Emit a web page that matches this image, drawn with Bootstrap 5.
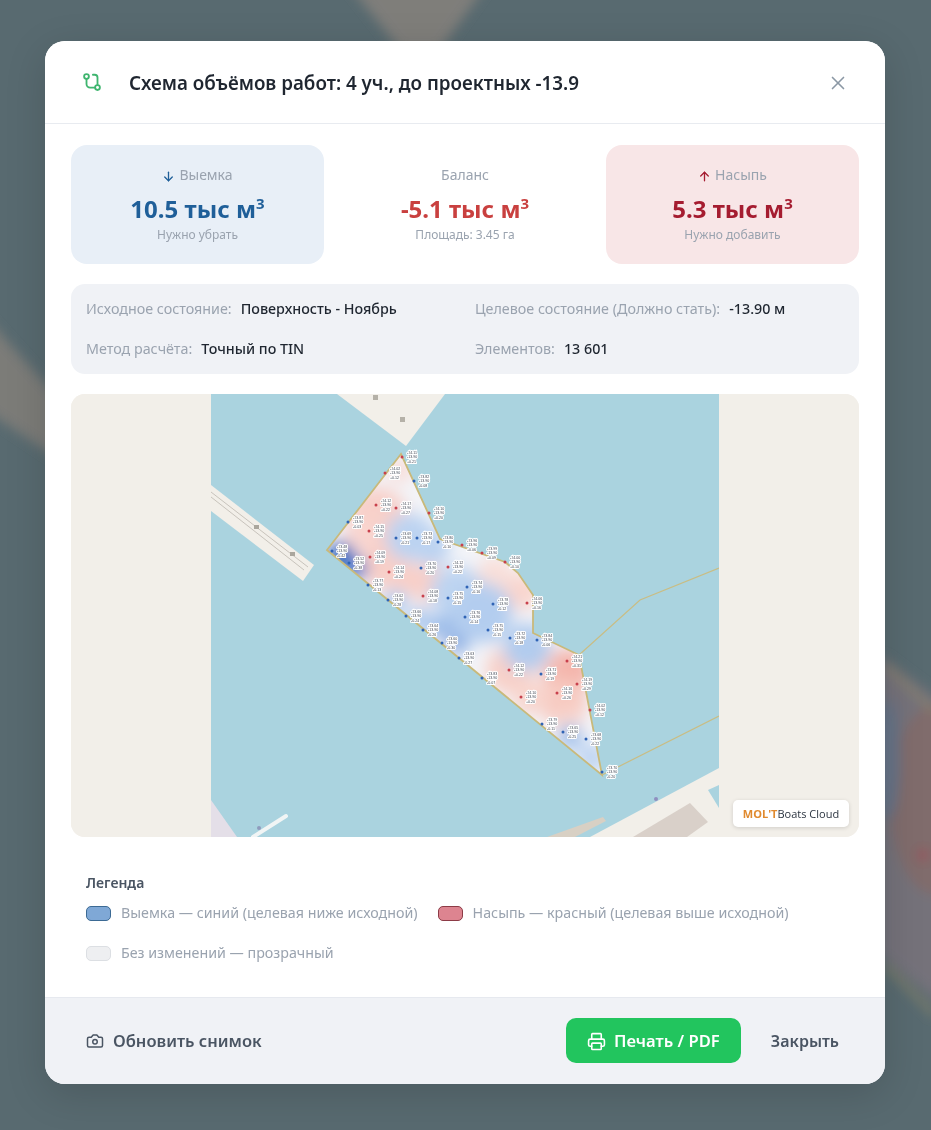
<!doctype html>
<html lang="ru">
<head>
  <meta charset="utf-8">
  <title>Схема объёмов работ</title>
  <link href="https://cdn.jsdelivr.net/npm/bootstrap@5.3.3/dist/css/bootstrap.min.css" rel="stylesheet">
  <style>
    html, body { height: 100%; }
    body { background: #586a70; font-family: "Noto Sans", "Open Sans", sans-serif; overflow: hidden; }
    .backdrop-map { position: fixed; inset: 0; width: 100%; height: 100%; }
    .page-wrap { position: relative; padding: 41px 46px 46px 45px; }
    .report-modal { border: 0; border-radius: 20px; overflow: hidden; box-shadow: 0 10px 40px rgba(0, 0, 0, .15); }
    .report-head { height: 83px; padding: 1px 36px 0; background: #fff; border-bottom: 1px solid #e8ebf0; }
    .report-title { font-size: 18.8px; font-weight: 600; color: #1f2630; margin: 2px 0 0 26px; }
    .btn-x { background: none; border: 0; padding: 0; color: #8b98a5; line-height: 0; margin-left: auto; }
    .report-body { padding: 21px 26px 0; }
    .kpi-grid { display: grid; grid-template-columns: 253px 1fr 253px; gap: 20px; }
    .kpi-box { height: 119px; border-radius: 16px; text-align: center; padding-top: 20px; }
    .kpi-out { background: #e8eff7; }
    .kpi-in { background: #f8e6e7; }
    .kpi-label { font-size: 14px; line-height: 20px; color: #9aa3af; }
    .kpi-value { font-size: 24px; font-weight: 700; line-height: 34px; margin-top: 7px; }
    .kpi-value sup { font-size: 15px; top: -.6em; }
    .kpi-note { font-size: 12px; line-height: 16px; color: #9aa3af; margin-top: 1px; }
    .c-out { color: #1f5f99; }
    .c-bal { color: #c9403f; }
    .c-in { color: #a51c30; }
    .info-box { background: #f0f2f6; border-radius: 14px; margin-top: 20px; height: 90px; padding: 5px 15px; display: grid; grid-template-columns: 389px 1fr; grid-auto-rows: 40px; align-items: center; font-size: 14.3px; }
    .info-box span { color: #9aa3af; margin-right: 9px; }
    .info-box b { color: #1f2630; font-weight: 500; }
    .map-box { position: relative; margin-top: 20px; height: 443px; border-radius: 14px; overflow: hidden; background: #f2efe9; }
    .map-box svg { display: block; }
    .map-brand { position: absolute; right: 10px; bottom: 10px; width: 116px; height: 27px; background: #fff; border-radius: 5px; box-shadow: 0 1px 4px rgba(0, 0, 0, .14); font-size: 11px; line-height: 27px; text-align: center; color: #2b3440; font-family: "Open Sans", sans-serif; }
    .map-brand b { color: #e08a2e; }
    .legend-box { padding: 36px 15px 0; height: 160px; }
    .legend-title { font-size: 14px; font-weight: 600; color: #4a5563; line-height: 20px; margin-bottom: 10px; }
    .legend-row { display: flex; flex-wrap: wrap; column-gap: 20px; row-gap: 20px; }
    .legend-item { display: flex; align-items: center; gap: 10px; font-size: 14.25px; line-height: 20px; color: #9aa3af; }
    .swatch { width: 25px; height: 15px; border-radius: 5px; border: 1px solid; }
    .sw-out { background: #7fa8d6; border-color: #3c6a94; }
    .sw-in { background: #dd8490; border-color: #8c3b46; }
    .sw-none { background: #eeeff1; border-color: #dcdfe3; }
    .report-foot { height: 87px; background: #f0f2f6; border-top: 1px solid #e6e9ef; padding: 0 26px 0 41px; }
    .btn-snap, .btn-close-txt { background: none; border: 0; padding: 0; font-size: 16.5px; font-weight: 600; color: #4a5563; }
    .btn-snap { gap: 9px; }
    .btn-close-txt { margin-left: 30px; margin-right: 20px; font-size: 16px; }
    .btn-print { background: #22c55e; color: #fff; border: 0; border-radius: 10px; width: 175px; height: 45px; font-size: 16.6px; font-weight: 600; margin-bottom: 2px; padding: 2px 0 0; }
    .btn-print:hover { background: #22c55e; color: #fff; }
    .pt-label { font-family: "Liberation Sans", sans-serif; font-size: 3.6px; fill: #3d4452; stroke: #fff; stroke-width: 2px; paint-order: stroke; }
  </style>
</head>
<body>
  <svg class="backdrop-map" viewBox="0 0 931 1130" preserveAspectRatio="none" aria-hidden="true">
    <defs><filter id="bgBlur" x="-20%" y="-20%" width="140%" height="140%"><feGaussianBlur stdDeviation="6"/></filter></defs>
    <rect width="931" height="1130" fill="#586a70"/>
    <g filter="url(#bgBlur)">
      <polygon points="345,-20 490,-20 440,50 400,50" fill="#7f7e7a"/>
      <polygon points="-30,300 60,400 60,460 -30,400" fill="#7b7b78"/>
      <polygon points="880,655 960,715 960,1020 880,955" fill="#75727a"/>
      <ellipse cx="935" cy="800" rx="45" ry="95" fill="#806c6c"/>
      <ellipse cx="888" cy="760" rx="12" ry="60" fill="#667387"/>
      <circle cx="923" cy="855" r="6" fill="#98525c"/>
      <path d="M885 665 L935 712" stroke="#8b8468" stroke-width="4" fill="none"/>
      <path d="M885 965 L935 1015" stroke="#8b8468" stroke-width="4" fill="none"/>
    </g>
  </svg>

  <div class="page-wrap">
    <div class="card report-modal">
      <div class="report-head d-flex align-items-center">
        <svg width="22" height="22" viewBox="0 0 24 24" fill="none" stroke="#3fb56f" stroke-width="2" stroke-linecap="round" stroke-linejoin="round">
          <circle cx="6" cy="5" r="2.6"/>
          <path d="M6 7.6V13a4 4 0 0 0 4 4h5.4"/>
          <path d="M13 3h2a3 3 0 0 1 3 3v8.400"/>
          <circle cx="18" cy="17" r="2.6"/>
        </svg>
        <h5 class="report-title">Схема объёмов работ: 4 уч., до проектных -13.9</h5>
        <button class="btn-x" type="button" aria-label="Закрыть">
          <svg width="22" height="22" viewBox="0 0 24 24" fill="none" stroke="currentColor" stroke-width="1.8" stroke-linecap="round"><path d="M18 6 6 18"/><path d="m6 6 12 12"/></svg>
        </button>
      </div>

      <div class="report-body">
        <div class="kpi-grid">
          <div class="kpi-box kpi-out">
            <div class="kpi-label">
              <svg class="c-out me-1" width="13" height="13" viewBox="0 0 24 24" fill="none" stroke="currentColor" stroke-width="2.400" stroke-linecap="round" stroke-linejoin="round"><path d="M12 4v16"/><path d="m19 13-7 7-7-7"/></svg>Выемка
            </div>
            <div class="kpi-value c-out">10.5 тыс м<sup>3</sup></div>
            <div class="kpi-note">Нужно убрать</div>
          </div>
          <div class="kpi-box">
            <div class="kpi-label">Баланс</div>
            <div class="kpi-value c-bal">-5.1 тыс м<sup>3</sup></div>
            <div class="kpi-note">Площадь: 3.45 га</div>
          </div>
          <div class="kpi-box kpi-in">
            <div class="kpi-label">
              <svg class="c-in me-1" width="13" height="13" viewBox="0 0 24 24" fill="none" stroke="currentColor" stroke-width="2.400" stroke-linecap="round" stroke-linejoin="round"><path d="M12 20V4"/><path d="m5 11 7-7 7 7"/></svg>Насыпь
            </div>
            <div class="kpi-value c-in">5.3 тыс м<sup>3</sup></div>
            <div class="kpi-note">Нужно добавить</div>
          </div>
        </div>

        <div class="info-box">
          <div><span>Исходное состояние:</span><b>Поверхность - Ноябрь</b></div>
          <div><span>Целевое состояние (Должно стать):</span><b>-13.90 м</b></div>
          <div><span>Метод расчёта:</span><b>Точный по TIN</b></div>
          <div><span>Элементов:</span><b>13 601</b></div>
        </div>

        <div class="map-box">
          <svg id="schema" width="788" height="443" viewBox="71 394 788 443">
            <defs>
              <clipPath id="site"><polygon points="327,550 401,454 440,539 505,562 518,573 533,595 533,633 579,655 602,775"/></clipPath>
              <clipPath id="tile"><rect x="211" y="394" width="508" height="443"/></clipPath>
              <filter id="heatBlur" x="-10%" y="-10%" width="120%" height="120%"><feGaussianBlur stdDeviation="8"/></filter>
            </defs>
            <rect x="71" y="394" width="788" height="443" fill="#f2efe9"/>
            <g clip-path="url(#tile)">
              <rect x="211" y="394" width="508" height="443" fill="#aad3df"/>
              <polygon points="337,394 445,394 406,446" fill="#f2efe9"/>
              <polygon points="211,485 314,565 303,581 211,511" fill="#f2efe9"/>
              <path d="M211 492 L308 567 M211 497 L304 570" stroke="#bdb8b0" stroke-width=".8" fill="none"/>
              <path d="M254 525h5v4h-5z M290 552h5v4h-5z" fill="#aaa69d"/>
              <polygon points="211,800 237,837 211,837" fill="#e4dfe8"/>
              <path d="M253 837 L286 816" stroke="#f1f5f5" stroke-width="4" stroke-linecap="round"/>
              <circle cx="259" cy="828" r="2" fill="#8f9bbd"/>
              <polygon points="590,837 719,768 719,837" fill="#f2efe9"/>
              <polygon points="547,837 603,817 606,821 575,837" fill="#d8d0c4"/>
              <polygon points="633,837 690,803 708,822 687,837" fill="#d9d0c9"/>
              <polygon points="708,790 719,785 719,808" fill="#aad3df"/>
              <circle cx="656" cy="799" r="2" fill="#8f8fc0"/>
              <path d="M373 395h5v5h-5z M400 417h5v5h-5z" fill="#b5b1a8"/>
              <path d="M579 655 L640 600 L719 568 M602 775 L719 716" stroke="#c9bd84" stroke-width="1.200" fill="none"/>
            </g>
            <g clip-path="url(#site)">
              <rect x="320" y="450" width="290" height="330" fill="#f3f4f8"/>
              <g id="heat" filter="url(#heatBlur)"></g>
            </g>
            <polygon points="327,550 401,454 440,539 505,562 518,573 533,595 533,633 579,655 602,775" fill="none" stroke="#c9b97a" stroke-width="1.800"/>
            <g id="points"></g>
          </svg>
          <div class="map-brand"><b>MOL'T</b>Boats Cloud</div>
        </div>

        <div class="legend-box">
          <div class="legend-title">Легенда</div>
          <div class="legend-row">
            <div class="legend-item"><i class="swatch sw-out"></i>Выемка — синий (целевая ниже исходной)</div>
            <div class="legend-item"><i class="swatch sw-in"></i>Насыпь — красный (целевая выше исходной)</div>
            <div class="legend-item"><i class="swatch sw-none"></i>Без изменений — прозрачный</div>
          </div>
        </div>
      </div>

      <div class="report-foot d-flex align-items-center">
        <button class="btn-snap d-flex align-items-center" type="button">
          <svg width="18" height="18" viewBox="0 0 24 24" fill="none" stroke="currentColor" stroke-width="2" stroke-linecap="round" stroke-linejoin="round"><path d="M14.500 4h-5L7 7H4a2 2 0 0 0-2 2v9a2 2 0 0 0 2 2h16a2 2 0 0 0 2-2V9a2 2 0 0 0-2-2h-3l-2.500-3z"/><circle cx="12" cy="13" r="3"/></svg>
          Обновить снимок
        </button>
        <button class="btn btn-print d-flex align-items-center justify-content-center gap-2 ms-auto" type="button">
          <svg width="19" height="19" viewBox="0 0 24 24" fill="none" stroke="currentColor" stroke-width="2" stroke-linecap="round" stroke-linejoin="round"><path d="M6 18H4a2 2 0 0 1-2-2v-5a2 2 0 0 1 2-2h16a2 2 0 0 1 2 2v5a2 2 0 0 1-2 2h-2"/><path d="M6 9V3a1 1 0 0 1 1-1h10a1 1 0 0 1 1 1v6"/><rect x="6" y="14" width="12" height="8" rx="1"/></svg>
          Печать / PDF
        </button>
        <button class="btn-close-txt" type="button">Закрыть</button>
      </div>
    </div>
  </div>

  <script src="https://cdn.jsdelivr.net/npm/bootstrap@5.3.3/dist/js/bootstrap.bundle.min.js"></script>
  <script>
    const NS = 'http://www.w3.org/2000/svg';

    // x, y, radius, colour
    const blobs = [
      [377, 517, 30, '#f8d0c9'], [387, 563, 27, '#f8cfc8'], [427, 583, 20, '#f8d0c9'], [400, 470, 12, '#f9dcd7'],
      [360, 535, 16, '#f9d6d0'], [410, 580, 14, '#f8cfc8'], [495, 575, 18, '#f9dfd9'], [522, 592, 18, '#f9d6ce'],
      [510, 670, 24, '#f8d0c8'], [567, 673, 24, '#f4b4aa'], [563, 702, 24, '#f7cac1'], [530, 697, 18, '#f8d5ce'],
      [568, 725, 14, '#f9d9d2'], [452, 645, 9, '#f9dcd6'], [545, 660, 12, '#f7cbc2'],
      [341, 556, 14, '#3169c0'], [356, 569, 11, '#3f76cb'], [410, 537, 24, '#bcd3f1'], [432, 548, 18, '#bcd3f1'],
      [457, 593, 27, '#bdd4f1'], [483, 613, 30, '#b3cdef'], [527, 647, 24, '#b2ccee'], [443, 628, 13, '#9bbce9'],
      [458, 644, 11, '#8db1e5'], [395, 603, 13, '#b2ccee'], [420, 620, 12, '#acc8ed'], [570, 737, 13, '#a5c3eb'], [592, 758, 15, '#c0d5f2']
    ];
    const heat = document.getElementById('heat');
    blobs.forEach(b => {
      const c = document.createElementNS(NS, 'circle');
      c.setAttribute('cx', b[0]);
      c.setAttribute('cy', b[1]);
      c.setAttribute('r', b[2]);
      c.setAttribute('fill', b[3]);
      heat.appendChild(c);
    });

    // x, y, height difference (+ fill, - cut)
    const pts = [
      [402, 457, .21], [385, 473, .12], [414, 481, -.08], [429, 513, .2], [376, 505, .22], [396, 508, .27],
      [348, 522, -.03], [369, 531, .25], [396, 538, -.21], [417, 538, -.17], [438, 542, -.1], [462, 545, .06],
      [482, 553, .09], [505, 562, .1], [332, 551, -.42], [349, 563, -.38], [370, 557, .19], [389, 572, .24],
      [421, 568, -.2], [448, 567, .22], [368, 585, -.13], [467, 587, -.16], [388, 600, -.28], [423, 596, .18],
      [448, 598, -.15], [493, 604, -.12], [527, 603, .16], [406, 616, -.24], [465, 617, -.14], [423, 630, -.26],
      [488, 630, -.15], [510, 638, -.18], [537, 640, -.06], [442, 643, -.3], [459, 658, -.27], [567, 661, .31],
      [509, 670, .22], [541, 674, -.19], [482, 678, -.07], [577, 684, .29], [557, 693, .26], [521, 697, .2],
      [590, 710, .12], [542, 724, -.11], [563, 732, -.25], [586, 739, -.22], [602, 772, -.2]
    ];
    const layer = document.getElementById('points');
    pts.forEach(p => {
      const dot = document.createElementNS(NS, 'circle');
      dot.setAttribute('cx', p[0]);
      dot.setAttribute('cy', p[1]);
      dot.setAttribute('r', 1.5);
      dot.setAttribute('fill', p[2] > 0 ? '#c8404c' : '#2f63b5');
      layer.appendChild(dot);

      const top = -13.9 - p[2];
      const lines = [top.toFixed(2), '-13.90', (p[2] > 0 ? '+' : '') + p[2].toFixed(2)];
      lines.forEach((line, n) => {
        const t = document.createElementNS(NS, 'text');
        t.setAttribute('class', 'pt-label');
        t.setAttribute('x', p[0] + 5);
        t.setAttribute('y', p[1] - 3 + n * 4.4);
        t.textContent = line;
        layer.appendChild(t);
      });
    });
  </script>
</body>
</html>
